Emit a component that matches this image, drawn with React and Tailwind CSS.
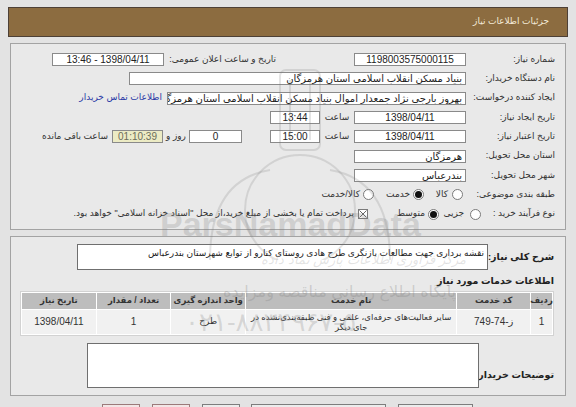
import React from "react";

const Field = ({ className, children, center }) => (
  <div
    className={`h-[13px] border border-[#8a8a8a] bg-white px-[3px] text-[10px] leading-[11px] text-[#222] whitespace-nowrap overflow-hidden ${
      center ? "text-center" : "text-right"
    } ${className}`}
  >
    {children}
  </div>
);

const Radio = ({ checked }) => (
  <span className="flex h-[11px] w-[11px] shrink-0 items-center justify-center rounded-full border border-[#7a7a7a] bg-white">
    {checked && <span className="h-[7px] w-[7px] rounded-full bg-[#111]" />}
  </span>
);

const Row = ({ children }) => <div className="flex h-[19.3px] items-center">{children}</div>;

const Label = ({ children, className }) => (
  <span className={`shrink-0 whitespace-nowrap text-[9px] text-[#333] ${className}`}>{children}</span>
);

export default function App() {
  const cols = ["w-[21px]", "w-[73px]", "w-[211px]", "w-[74px]", "w-[74px]", "w-[74px]"];
  const head = ["ردیف", "کد خدمت", "نام خدمت", "واحد اندازه گیری", "تعداد / مقدار", "تاریخ نیاز"];

  return (
    <div
      dir="rtl"
      className="relative min-h-[407px] w-[576px] overflow-hidden bg-[#e3e3e3] pt-[7px] font-['Liberation_Sans','DejaVu_Sans',sans-serif]"
    >
      {/* header */}
      <div className="mx-[8px] flex h-[30px] w-[560px] items-center border border-[#4d4036] bg-[#8c6c40] pr-[18px]">
        <span className="text-[9px] text-[#f3ead8]">جزئیات اطلاعات نیاز</span>
      </div>

      {/* main panel */}
      <div className="mx-[10px] mt-[6px] w-[556px] border border-[#a3a3a3] bg-[#e9e9e9] pb-[5px] pr-[10px] pt-[6px]">
        <Row>
          <Label className="w-[89px]">شماره نیاز:</Label>
          <Field center className="w-[112px]">1198003575000115</Field>
          <Label className="mr-[78px] w-[112px]">تاریخ و ساعت اعلان عمومی:</Label>
          <Field center className="w-[112px]">1398/04/11 - 13:46</Field>
        </Row>
        <Row>
          <Label className="w-[89px]">نام دستگاه خریدار:</Label>
          <Field className="w-[337px]">بنیاد مسکن انقلاب اسلامی استان هرمزگان</Field>
        </Row>
        <Row>
          <Label className="w-[89px]">ایجاد کننده درخواست:</Label>
          <Field className="w-[299px]">بهروز  بارجی نژاد جمعدار اموال بنیاد مسکن انقلاب اسلامی استان هرمزگان</Field>
          <span className="mr-[5px] whitespace-nowrap text-[9px] text-[#2b3aa6]">اطلاعات تماس خریدار</span>
        </Row>
        <Row>
          <Label className="w-[89px]">تاریخ ایجاد نیاز:</Label>
          <Field center className="w-[112px]">1398/04/11</Field>
          <Label className="w-[34px] text-center">ساعت</Label>
          <Field center className="w-[50px]">13:44</Field>
        </Row>
        <Row>
          <Label className="w-[89px]">تاریخ اعتبار نیاز:</Label>
          <Field center className="w-[112px]">1398/04/11</Field>
          <Label className="w-[34px] text-center">ساعت</Label>
          <Field center className="w-[50px]">15:00</Field>
          <Field center className="mr-[28px] w-[53px]">0</Field>
          <Label className="w-[26px] text-center">روز و</Label>
          <Field center className="w-[51px] !bg-[#ecebc4] !text-[#6d6d5a]">01:10:39</Field>
          <Label className="mr-[4px]">ساعت باقی مانده</Label>
        </Row>
        <Row>
          <Label className="w-[89px]">استان محل تحویل:</Label>
          <Field className="w-[112px]">هرمزگان</Field>
        </Row>
        <Row>
          <Label className="w-[89px]">شهر محل تحویل:</Label>
          <Field className="w-[112px]">بندرعباس</Field>
        </Row>
        <Row>
          <Label className="w-[92px]">طبقه بندی موضوعی:</Label>
          <div className="flex w-[39px] items-center gap-[4px]">
            <Radio />
            <Label>کالا</Label>
          </div>
          <div className="flex w-[50px] items-center gap-[3px]">
            <Radio checked />
            <Label>خدمت</Label>
          </div>
          <div className="flex items-center gap-[3px]">
            <Radio />
            <Label>کالا/خدمت</Label>
          </div>
        </Row>
        <Row>
          <Label className="w-[74px]">نوع فرآیند خرید :</Label>
          <div className="flex w-[42px] items-center gap-[6px]">
            <Radio />
            <Label>جزیی</Label>
          </div>
          <div className="flex w-[71px] items-center gap-[3px]">
            <Radio checked />
            <Label>متوسط</Label>
          </div>
          <div className="flex items-center gap-[4px]">
            <span className="flex h-[10px] w-[10px] shrink-0 items-center justify-center border border-[#7a7a7a] bg-white">
              <svg width="8" height="8" viewBox="0 0 8 8">
                <path d="M0.5 0.5 L7.5 7.5 M7.5 0.5 L0.5 7.5" stroke="#555" strokeWidth="0.9" />
              </svg>
            </span>
            <Label>پرداخت تمام یا بخشی از مبلغ خرید،از محل "اسناد خزانه اسلامی" خواهد بود.</Label>
          </div>
        </Row>
      </div>

      {/* second panel */}
      <div className="mx-[10px] mt-[6px] w-[556px] border border-[#a3a3a3] bg-[#e9e9e9] pb-[7px] pl-[10px] pr-[11px] pt-[7px]">
        <div className="flex items-center">
          <span className="w-[66px] shrink-0 whitespace-nowrap text-[9.5px] font-bold text-[#222]">شرح کلی نیاز:</span>
          <div className="h-[26px] w-[411px] border border-[#6f6f6f] bg-white px-[3px] pt-[2px] text-[9px] leading-[12px] text-[#222]">
            نقشه برداری جهت مطالعات بازنگری طرح هادی روستای کنارو از توابع شهرستان بندرعباس
          </div>
        </div>

        <div className="mt-[4px] text-[9.5px] font-bold leading-[14px] text-[#222]">اطلاعات خدمات مورد نیاز</div>

        <div className="mt-[3px] w-[534px] border border-[#d2d2d2] bg-white p-[1px]">
          <div className="flex gap-[1px]">
            {head.map((h, i) => (
              <div
                key={h}
                className={`${cols[i]} flex h-[16px] items-center justify-center bg-[#bdbdbd] text-[8.5px] font-bold text-[#333]`}
              >
                {h}
              </div>
            ))}
          </div>
          <div className="mt-[1px] flex gap-[1px] text-[10px] text-[#333]">
            <div className={`${cols[0]} flex h-[24px] items-center justify-center bg-[#f1f1f1]`}>1</div>
            <div className={`${cols[1]} flex h-[24px] items-center justify-center bg-[#f1f1f1]`}>ز-74-749</div>
            <div className={`${cols[2]} flex h-[24px] items-center justify-center bg-[#f1f1f1] px-[3px] text-center text-[8.5px] leading-[10px]`}>
              سایر فعالیت‌های حرفه‌ای، علمی و فنی طبقه‌بندی‌نشده در جای دیگر
            </div>
            <div className={`${cols[3]} flex h-[24px] items-center justify-center bg-[#f1f1f1] text-[9px]`}>طرح</div>
            <div className={`${cols[4]} flex h-[24px] items-center justify-center bg-[#f1f1f1]`}>1</div>
            <div className={`${cols[5]} flex h-[24px] items-center justify-center bg-[#f1f1f1]`}>1398/04/11</div>
          </div>
        </div>

        <div className="mt-[7px] flex items-start">
          <span className="mt-[25px] w-[75px] shrink-0 whitespace-nowrap text-[9.5px] font-bold text-[#222]">توضیحات خریدار:</span>
          <div className="h-[45px] w-[392px] border border-[#6f6f6f] bg-white" />
        </div>
      </div>

      {/* bottom buttons (cut off) */}
      <div className="mt-[8px] flex h-[20px] pr-[103px]">
        <div className="h-[20px] w-[75px] border border-[#7d7d7d] bg-[#ececec]" />
        <div className="mr-[12px] h-[20px] w-[135px] border border-[#7d7d7d] bg-[#ececec]" />
        <div className="mr-[11px] h-[20px] w-[38px] border border-[#7d7d7d] bg-[#ececec]" />
        <div className="mr-[12px] h-[20px] w-[38px] border border-[#9b7a7a] bg-[#f2e6e6]" />
        <div className="mr-[12px] h-[20px] w-[38px] border border-[#9b7a7a] bg-[#f2e6e6]" />
      </div>

      {/* watermark */}
      <div className="pointer-events-none absolute inset-0 select-none">
        <svg className="absolute left-[150px] top-[60px]" width="300" height="200" viewBox="0 0 300 200" fill="none" stroke="rgba(120,120,120,0.2)" strokeWidth="2">
          <circle cx="150" cy="150" r="55" />
          <path d="M60 200 Q60 120 120 110" />
          <path d="M240 200 Q240 120 180 110" />
          <rect x="130" y="10" width="40" height="80" rx="6" />
          <path d="M140 20 V80 M160 20 V80" />
        </svg>
        <div dir="ltr" className="absolute left-[160px] top-[206px] text-[34px] font-bold leading-[36px] text-[rgba(130,130,130,0.26)]">ParsNamadData</div>
        <div className="absolute right-[110px] top-[250px] text-[13px] italic text-[rgba(130,130,130,0.22)]">مرکز فراوری اطلاعات پارس نماد داده</div>
        <div className="absolute right-[120px] top-[280px] text-[16px] text-[rgba(130,130,130,0.3)]">پایگاه اطلاع رسانی مناقصه ومزایده</div>
        <div dir="ltr" className="absolute left-[185px] top-[303px] text-[26px] text-[rgba(130,130,130,0.26)]">۰۲۱-۸۸۳۴۹۶۷-۵</div>
      </div>
    </div>
  );
}
